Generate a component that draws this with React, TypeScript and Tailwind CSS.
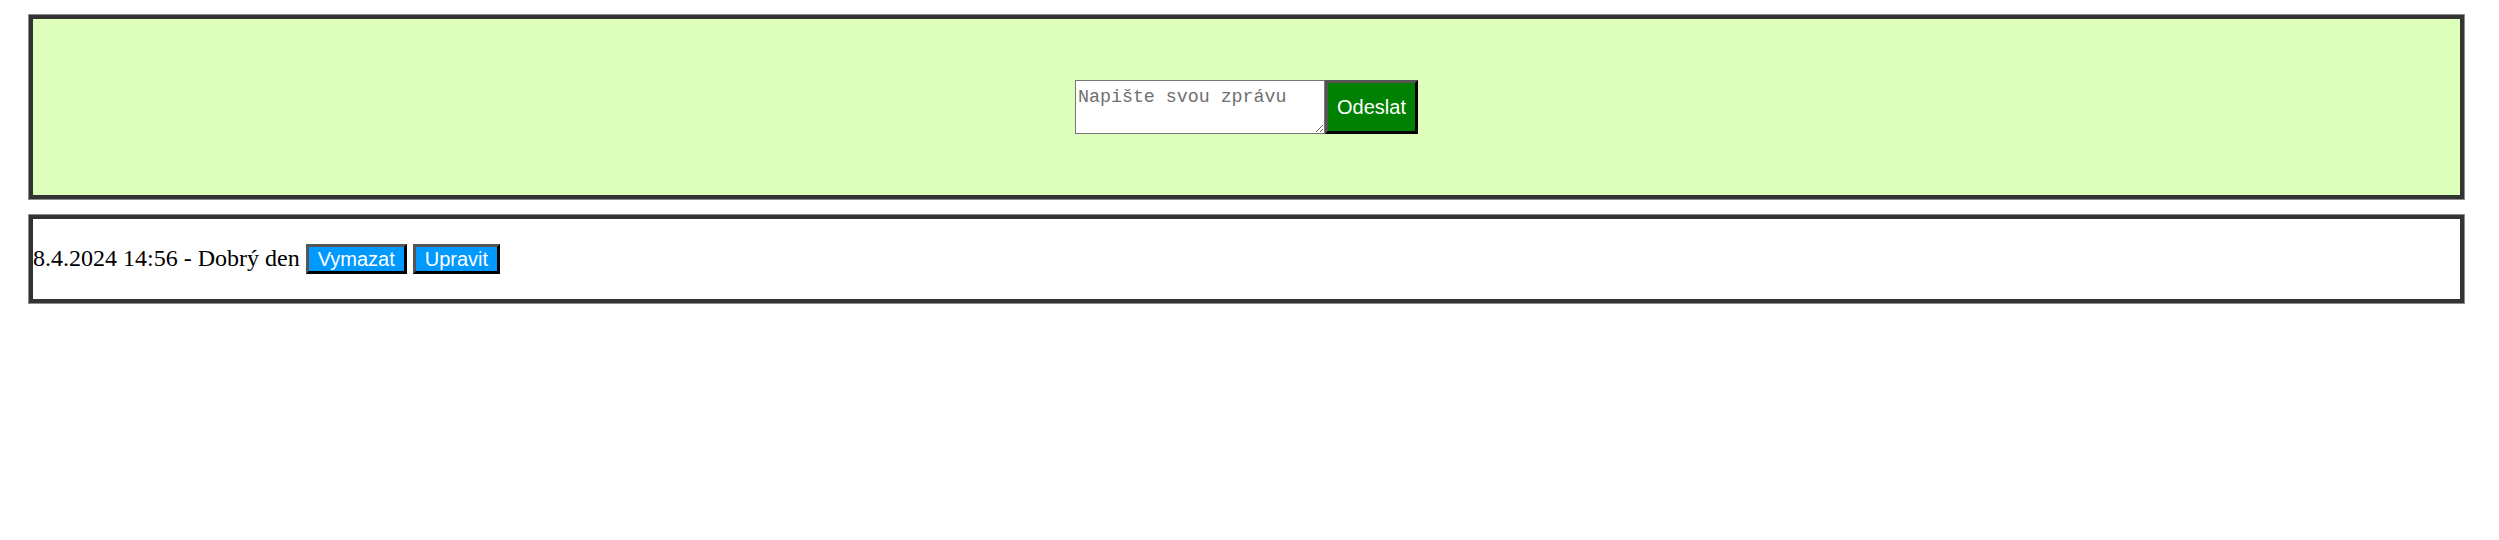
import React from "react";

export default function App() {
  return (
    <div className="min-h-[540px] bg-white pl-[29px] pr-[35px] pt-[15px]">
      <div className="flex h-[184px] items-center justify-center border-4 border-[#333333] bg-[#ddffbb] shadow-[0_0_0_1px_#8c8c8c]">
        <div className="flex items-start">
          <textarea
            placeholder="Napište svou zprávu"
            className="block h-[54px] w-[250px] border border-[#767676] bg-white px-[2px] pt-[6px] text-[18.3px] leading-[20px] text-black placeholder:text-[#6f6f6f] outline-none"
            style={{ fontFamily: '"Liberation Mono", "DejaVu Sans Mono", monospace', resize: "both" }}
          />
          <button
            className="h-[54px] border-[3px] border-t-[#555555] border-l-[#555555] border-b-black border-r-black bg-[#008000] px-[9px] text-[20px] leading-[23px] text-white"
            style={{ fontFamily: '"Liberation Sans", Arial, sans-serif' }}
          >
            Odeslat
          </button>
        </div>
      </div>
      <div className="mt-[16px] flex h-[88px] items-center border-4 border-[#333333] bg-white shadow-[0_0_0_1px_#8c8c8c]">
        <div className="flex items-baseline gap-[6px]">
          <span
            className="text-[24px] leading-[28px] text-black"
            style={{ fontFamily: '"Liberation Serif", "Times New Roman", serif' }}
          >
            8.4.2024 14:56 - Dobrý den
          </span>
          <button
            className="h-[30px] border-[3px] border-t-[#555555] border-l-[#555555] border-b-black border-r-black bg-[#0099ff] px-[9px] text-[20px] leading-[24px] text-white"
            style={{ fontFamily: '"Liberation Sans", Arial, sans-serif' }}
          >
            Vymazat
          </button>
          <button
            className="h-[30px] border-[3px] border-t-[#555555] border-l-[#555555] border-b-black border-r-black bg-[#0099ff] px-[9px] text-[20px] leading-[24px] text-white"
            style={{ fontFamily: '"Liberation Sans", Arial, sans-serif' }}
          >
            Upravit
          </button>
        </div>
      </div>
    </div>
  );
}
